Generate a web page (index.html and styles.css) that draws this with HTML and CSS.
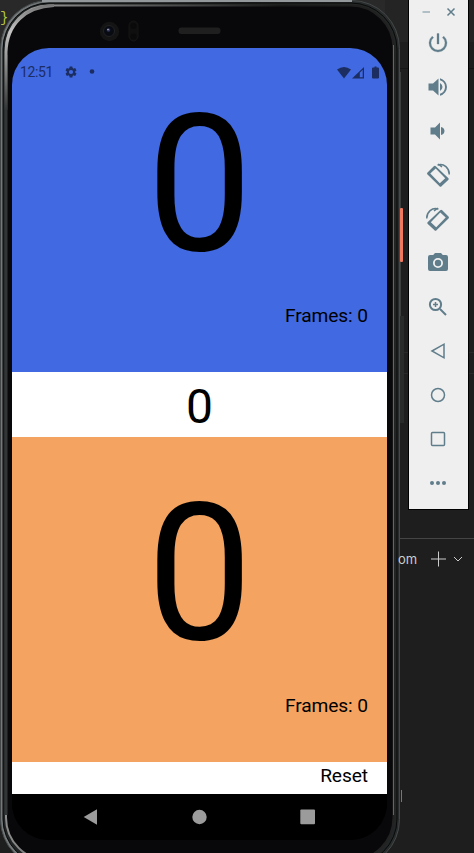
FILE: index.html
```html
<!DOCTYPE html>
<html lang="en">
<head>
<meta charset="utf-8">
<title>Frame counter</title>
<link rel="stylesheet" href="styles.css">
</head>
<body>
<main class="desktop">
  <svg class="backdrop" width="474" height="853" viewBox="0 0 474 853">
    <defs>
      <linearGradient id="side" x1="0" x2="1"><stop offset="0" stop-color="#74797b"/><stop offset=".4" stop-color="#55595a"/><stop offset=".6" stop-color="#252829"/><stop offset="1" stop-color="#292c2c"/></linearGradient>
      <linearGradient id="rim" x1="0" y1="0" x2="1" y2=".12"><stop offset="0" stop-color="#aaa"/><stop offset=".2" stop-color="#777"/><stop offset=".7" stop-color="#171717"/><stop offset="1" stop-color="#222"/></linearGradient>
      <linearGradient id="shine" gradientUnits="userSpaceOnUse" x1="0" y1="5" x2="0" y2="110"><stop offset="0" stop-color="#777"/><stop offset=".25" stop-color="#c4c4c4"/><stop offset=".5" stop-color="#999"/><stop offset="1" stop-color="#333636"/></linearGradient>
    </defs>
    <rect width="474" height="853" fill="#1e1e1e"/>
    <rect width="474" height="42" fill="#292929"/>
    <rect x="385" width="89" height="42" fill="#242424"/>
    <path d="M390 68.5H474" stroke="#151515"/>
    <path d="M400 352.5H474M400 373.5H474" stroke="#292929"/>
    <path d="M400 538.5H474" stroke="#454545"/>
    <rect x="399" y="72" width="1.5" height="250" fill="#5c5e5e"/>
    <rect x="400" y="208" width="3" height="54" rx="1" fill="#f07a60"/>
    <rect x="400" y="316" width="4" height="107" fill="#292b2b"/>
    <path d="M401.5 790V802" stroke="#777"/>
    <rect x=".5" y=".5" width="399" height="867" rx="48" fill="url(#side)" stroke="#444848"/>
    <path d="M42 1H352" stroke="#93989a" stroke-width="2"/>
    <rect x="3" y="3" width="394" height="862" rx="46" fill="#222525" stroke="#090909"/>
    <rect x="6" y="5.500" width="387.500" height="855" rx="43" fill="#08080a" stroke="url(#rim)" stroke-width="2"/>
    <path d="M393.500 45V815" stroke="#626666"/>
    <path d="M6 55V815" stroke="#333636" stroke-width="3"/>
    <path d="M6 110V52C7 24 25 7 54 5.500" fill="none" stroke="url(#shine)" stroke-width="3"/>
    <circle cx="109.500" cy="31.500" r="9.700" fill="#141414"/><circle cx="109" cy="31" r="5.500" fill="#090b13" stroke="#222"/><circle cx="108.500" cy="30" r="1.800" fill="#34375b"/><circle cx="108" cy="29.500" r=".7" fill="#c5c9df"/>
    <rect x="129" y="21" width="9" height="20" rx="4.500" fill="#0f0f0f" stroke="#151515"/><circle cx="133.500" cy="26" r="3" fill="#0a0a0a"/><circle cx="133.500" cy="36.500" r="3" fill="#0a0a0a"/>
    <rect x="178.500" y="27.500" width="42" height="6.500" rx="3" fill="#1f1f1f"/>
  </svg>
  <span class="code-brace">}</span>

  <section class="screen">
    <div class="player blue">
      <header class="status">
        <span class="clock">12:51</span>
        <svg class="gear" viewBox="0 0 24 24"><path d="M19.140 12.940a7 7 0 0 0 0-1.880l2.030-1.580a.5.500 0 0 0 .12-.61l-1.920-3.320a.5.500 0 0 0-.59-.22l-2.390.96a7 7 0 0 0-1.620-.94l-.36-2.540A.5.500 0 0 0 13.930 2.400h-3.840a.5.500 0 0 0-.47.410l-.36 2.540a7 7 0 0 0-1.620.94l-2.390-.96a.5.500 0 0 0-.59.220L2.740 8.870a.5.500 0 0 0 .12.610l2.030 1.580a7 7 0 0 0 0 1.880l-2.030 1.580a.5.500 0 0 0-.12.610l1.920 3.320a.5.500 0 0 0 .59.220l2.390-.96a7 7 0 0 0 1.620.94l.36 2.540a.5.500 0 0 0 .47.410h3.840a.5.500 0 0 0 .48-.41l.36-2.540a7 7 0 0 0 1.620-.94l2.390.96a.5.500 0 0 0 .59-.22l1.920-3.320a.5.500 0 0 0-.12-.61zM12 15.600a3.600 3.600 0 1 1 0-7.200 3.600 3.600 0 0 1 0 7.200z"/></svg>
        <svg class="dot" viewBox="0 0 6 6"><circle cx="3" cy="2.500" r="2.300"/></svg>
        <svg class="signals" viewBox="0 0 42 13"><path d="M0 3.500Q7 -1.500 14 3.500L7 12.500zM15 12.500L27 1v11.500zM36 1.500h1.500V.5h2v1H41q1 0 1 1v9q0 1-1 1h-5q-1 0-1-1v-9q0-1 1-1z"/><path class="gap" d="M22.800 6.700L25.700 3.800v7.500h-2.900z"/></svg>
      </header>
      <div class="score">0</div>
      <div class="frames">Frames: 0</div>
    </div>
    <div class="difference">0</div>
    <div class="player orange">
      <div class="score">0</div>
      <div class="frames">Frames: 0</div>
    </div>
    <div class="reset">Reset</div>
    <nav class="navigation">
      <svg viewBox="0 0 16 16"><path d="M.7 8L14 .3v15.400z"/></svg>
      <svg viewBox="0 0 16 16"><circle cx="8.500" cy="8" r="7.200"/></svg>
      <svg viewBox="0 0 16 16"><rect x=".3" y=".6" width="14.700" height="14.700" rx="1"/></svg>
    </nav>
  </section>

  <aside class="side">
    <div class="toolbar">
      <div class="window-controls"><svg viewBox="0 0 36 12"><path class="minimize" d="M1.500 6H9"/><path d="M26.500 2.500l7 7m0-7l-7 7"/></svg></div>
      <svg viewBox="0 0 24 24"><path d="M13 2.500h-2v10.500h2zM17.830 5.170l-1.420 1.420A7 7 0 1 1 7.580 6.580L6.170 5.170A9 9 0 1 0 17.830 5.170z" stroke="#607d8b" stroke-width=".3"/></svg>
      <svg viewBox="0 0 24 24"><path d="M2.500 8.500v7h4.500l5.500 5V3.500L7 8.500zM16.500 12A4.500 4.500 0 0 0 14 7.970v8.050A4.500 4.500 0 0 0 16.500 12zM14 3.230v2.060a7 7 0 0 1 0 13.420v2.060A9 9 0 0 0 14 3.230z"/></svg>
      <svg viewBox="0 0 24 24"><path d="M4.500 8.500v7H9l5 5V3.500l-5 5zM18.500 12A4.500 4.500 0 0 0 15 7.970v8.050A4.500 4.500 0 0 0 18.500 12z"/></svg>
      <svg viewBox="0 0 24 24"><g id="rotate"><path fill-rule="evenodd" d="M1.500 9.600L7.800 3.200q1-.9 2 0L22.200 15q1 1 0 2L15.500 23.200q-1 1-2 0L1.500 11.500q-.9-1 0-1.900zM4.300 10.400L13.800 20.200 19.200 15.200 9.700 5.400z"/><path class="line" d="M11.500 2.100C18-.2 23.500 5.500 23.200 11.500M12 1l4 3"/></g></svg>
      <svg viewBox="0 0 24 24"><use href="#rotate" transform="matrix(-1 0 0 1 24 0)"/></svg>
      <svg viewBox="0 0 24 24"><path fill-rule="evenodd" d="M9 2L7.200 4H4a2 2 0 0 0-2 2v12a2 2 0 0 0 2 2h16a2 2 0 0 0 2-2V6a2 2 0 0 0-2-2h-3.200L15 2zM12 7a5 5 0 1 1 0 10 5 5 0 0 1 0-10z"/><circle cx="12" cy="12" r="3.200"/></svg>
      <svg viewBox="0 0 24 24"><g class="line thick"><circle cx="9.500" cy="9.500" r="5.600"/><path d="M14 14l6 6"/></g><path class="line" d="M7 9.500h5M9.500 7v5"/></svg>
      <svg viewBox="0 0 24 24"><path class="line" d="M6 12l12-6.800v13.600z"/></svg>
      <svg viewBox="0 0 24 24"><circle class="line" cx="12" cy="12" r="6.500"/></svg>
      <svg viewBox="0 0 24 24"><rect class="line" x="5.500" y="5.500" width="13" height="13" rx="1"/></svg>
      <svg viewBox="0 0 24 24"><circle cx="6" cy="12" r="2"/><circle cx="12" cy="12" r="2"/><circle cx="18" cy="12" r="2"/></svg>
    </div>
    <div class="terminal"><span>om</span><svg viewBox="0 0 36 18"><path d="M1 9h15M8.500 1.500v15M24 7l4 4 4-4"/></svg></div>
  </aside>
</main>
</body>
</html>
```

FILE: styles.css
```css
* { box-sizing: border-box; }
body { margin: 0; overflow: hidden; background: #1e1e1e; font-family: Roboto, sans-serif; color: #000; }
svg { display: block; }
.desktop { position: relative; display: flex; width: 474px; height: 853px; overflow: hidden; }
.backdrop { position: absolute; inset: 0; }
.code-brace { position: absolute; left: 0; top: 10px; color: #b4c83c; font: 14px "Liberation Mono", monospace; }
.screen { position: relative; display: flex; flex-direction: column; flex: none; width: 375px; height: 792px; margin: 48px 0 0 12px; overflow: hidden; border-radius: 37px; background: #000; }
.player { position: relative; flex: none; height: 324.4px; text-align: right; }
.blue { background: #4169e1; }
.orange { background: #f4a460; }
.score { height: 260px; padding-top: 24px; text-align: center; font-size: 192px; line-height: 225px; transform: scaleX(.98); }
.blue .score { margin-top: -34px; }
.frames { padding: 0 19px; margin-top: -4px; font-size: 19.2px; line-height: 24px; letter-spacing: -.1px; }
.orange .frames { margin-top: -3px; }
.status { display: flex; align-items: center; height: 34px; padding: 14px 8px 0; color: #1b2d61; fill: #1b2d61; }
.clock { width: 43.5px; text-align: left; font-size: 14px; line-height: 20px; letter-spacing: -.35px; }
.gear { width: 14px; height: 14px; }
.dot { width: 6px; height: 6px; margin-left: 11px; }
.signals { width: 42px; height: 13px; margin-left: auto; }
.gap { fill: #4169e1; }
.difference { flex: none; height: 64.9px; padding-top: 7px; text-align: center; font-size: 48px; line-height: 56px; background: #fff; }
.reset { flex: none; height: 32.3px; padding: 2px 19px 0; text-align: right; font-size: 19.2px; line-height: 24px; letter-spacing: -.1px; background: #fff; }
.navigation { display: flex; flex: 1; align-items: flex-start; justify-content: space-between; padding: 15px 71.5px 0 70.5px; background: #000; fill: #9b9b9b; }
.navigation svg { width: 16px; height: 16px; }
.side { position: relative; width: 87px; }
.toolbar { display: flex; flex-direction: column; align-items: center; width: 61px; height: 510px; margin-left: 21px; padding-right: 2px; border: 1px solid #000; border-top: 0; background: #efefef; fill: #607d8b; }
.toolbar > svg { flex: none; width: 24px; height: 24px; margin-bottom: 20px; }
.window-controls { flex: none; align-self: stretch; height: 31px; padding: 6px 0 0 12px; }
.window-controls svg { width: 36px; height: 12px; fill: none; stroke: #607d8b; stroke-width: 1.5; }
.window-controls .minimize { stroke: #9db0b8; }
.line { fill: none; stroke: #607d8b; stroke-width: 1.5; }
.thick { stroke-width: 2; }
.terminal { display: flex; align-items: center; height: 22px; margin: 38px 0 0 11px; color: #ccc; font: 13px/22px Inter, sans-serif; }
.terminal span { width: 30px; }
.terminal svg { width: 36px; height: 18px; margin-left: 2px; fill: none; stroke: #ccc; }
```
